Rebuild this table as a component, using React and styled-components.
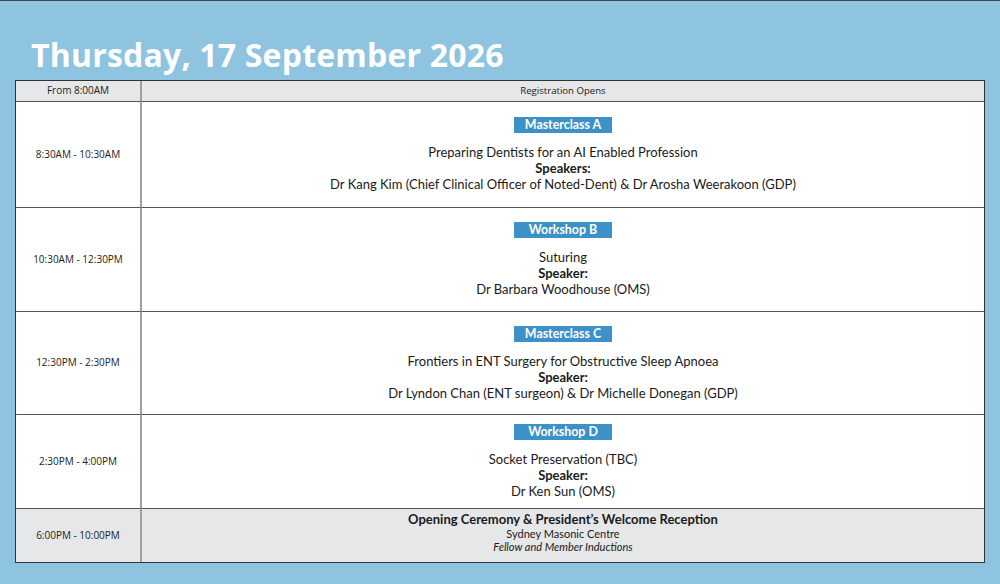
import React from "react";
import styled, { createGlobalStyle } from "styled-components";

const GlobalStyle = createGlobalStyle`
  html, body {
    margin: 0;
    padding: 0;
    background: #8fc4e1;
  }
`;

const Page = styled.div`
  width: 1000px;
  height: 584px;
  box-sizing: border-box;
  background: #8fc4e1;
  border-top: 1px solid #3a4a55;
  padding: 33px 15px 0 15px;
  font-family: "Lato", "Open Sans", sans-serif;
`;

const Heading = styled.h1`
  margin: 0 0 6px 16px;
  height: 40px;
  line-height: 42px;
  font-family: "Open Sans", sans-serif;
  font-weight: 700;
  font-size: 32px;
  letter-spacing: 0.2px;
  color: #ffffff;
`;

const Table = styled.div`
  display: grid;
  grid-template-columns: 126px 1fr;
  border: 1px solid #333;
  background: #fff;
`;

const Cell = styled.div`
  height: ${p => p.h}px;
  box-sizing: border-box;
  background: ${p => (p.shade ? "#e6e7e8" : "#fff")};
  border-bottom: ${p => (p.last ? "none" : "1px solid #555")};
  padding-bottom: ${p => p.pb || 0}px;
  display: flex;
  flex-direction: column;
  align-items: center;
  justify-content: center;
  text-align: center;
`;

const TimeCell = styled(Cell)`
  border-right: 2px solid #a0a0a0;
  font-family: "Open Sans", sans-serif;
  font-size: 10px;
  color: #222;
  padding-bottom: 2px;
`;

const DetailCell = styled(Cell)`
  font-size: 13px;
  line-height: 16px;
  color: #1a1a1a;
`;

const HeaderNote = styled.div`
  font-family: "Open Sans", sans-serif;
  font-size: 9.6px;
`;

const Badge = styled.div`
  width: 98px;
  height: 16px;
  line-height: 16px;
  background: #3d91c9;
  color: #fff;
  font-weight: 700;
  font-size: 12.4px;
  margin-bottom: 11px;
`;

const Line = styled.div`
  font-size: ${p => p.fs || 13}px;
  font-weight: ${p => (p.bold ? 700 : 400)};
  font-style: ${p => (p.italic ? "italic" : "normal")};
  line-height: ${p => p.lh || 16}px;
`;

const sessions = [
  {
    time: "8:30AM - 10:30AM",
    h: 106,
    badge: "Masterclass A",
    title: "Preparing Dentists for an AI Enabled Profession",
    label: "Speakers:",
    speakers:
      "Dr Kang Kim (Chief Clinical Officer of Noted-Dent) & Dr Arosha Weerakoon (GDP)",
  },
  {
    time: "10:30AM - 12:30PM",
    h: 104,
    badge: "Workshop B",
    title: "Suturing",
    label: "Speaker:",
    speakers: "Dr Barbara Woodhouse (OMS)",
  },
  {
    time: "12:30PM - 2:30PM",
    h: 103,
    badge: "Masterclass C",
    title: "Frontiers in ENT Surgery for Obstructive Sleep Apnoea",
    label: "Speaker:",
    speakers: "Dr Lyndon Chan (ENT surgeon) & Dr Michelle Donegan (GDP)",
  },
  {
    time: "2:30PM - 4:00PM",
    h: 94,
    badge: "Workshop D",
    title: "Socket Preservation (TBC)",
    label: "Speaker:",
    speakers: "Dr Ken Sun (OMS)",
  },
];

export default function App() {
  return (
    <>
      <GlobalStyle />
      <Page>
        <Heading>Thursday, 17 September 2026</Heading>
        <Table>
          <TimeCell h={21} shade>From 8:00AM</TimeCell>
          <DetailCell h={21} shade>
            <HeaderNote>Registration Opens</HeaderNote>
          </DetailCell>
          {sessions.map(s => (
            <React.Fragment key={s.time}>
              <TimeCell h={s.h}>{s.time}</TimeCell>
              <DetailCell h={s.h}>
                <Badge>{s.badge}</Badge>
                <Line>{s.title}</Line>
                <Line bold>{s.label}</Line>
                <Line>{s.speakers}</Line>
              </DetailCell>
            </React.Fragment>
          ))}
          <TimeCell h={53} shade last>6:00PM - 10:00PM</TimeCell>
          <DetailCell h={53} shade last pb={7}>
            <Line bold fs={13}>Opening Ceremony &amp; President’s Welcome Reception</Line>
            <Line lh={13} fs={11}>Sydney Masonic Centre</Line>
            <Line lh={13} fs={11} italic>Fellow and Member Inductions</Line>
          </DetailCell>
        </Table>
      </Page>
    </>
  );
}
